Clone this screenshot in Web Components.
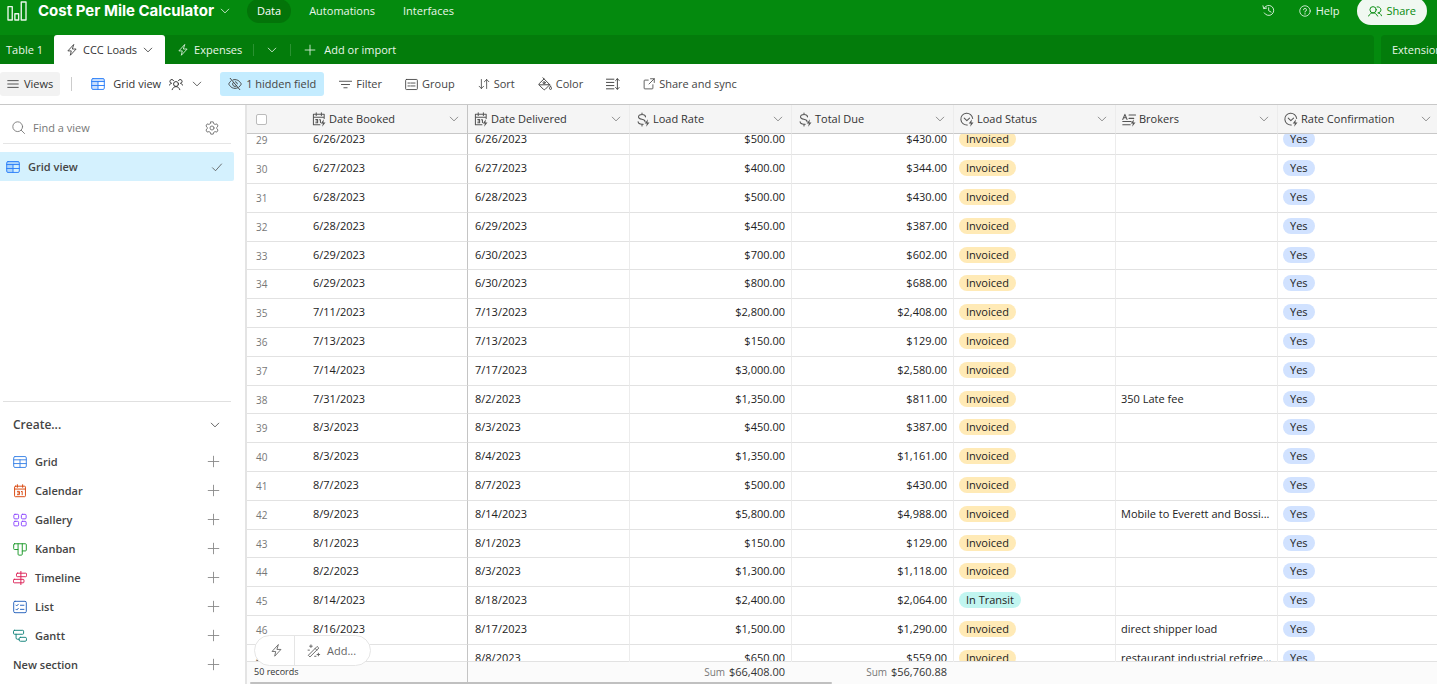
<!DOCTYPE html>
<html lang="en">
<head>
<meta charset="utf-8">
<title>Cost Per Mile Calculator</title>
<style>
  html, body {
    margin: 0;
    height: 100%;
  }

  body {
    display: flex;
    flex-direction: column;
    overflow: hidden;
    background: #fff;
    color: #333;
    font: 11px/16px "Open Sans", "Noto Sans", sans-serif;
  }

  main {
    flex: 1;
    min-height: 0;
    display: flex;
  }

  record-grid {
    flex: 1;
    min-width: 0;
  }
</style>
</head>
<body>
  <app-header name="Cost Per Mile Calculator"></app-header>
  <table-tabs></table-tabs>
  <view-toolbar></view-toolbar>
  <main>
    <views-sidebar></views-sidebar>
    <record-grid></record-grid>
  </main>

<script>
const BOLT = '<path fill="currentColor" stroke="none" d="M12.8 7.6 9.3 12.2h2.3l-.8 3.6 3.6-4.7h-2.3z"/>';

const ICONS = {
  logo: '<path d="M.8 4.5h3.4v10.7H.8zM6.3 10.2h3v5h-3zM11.4.8h3.8v14.4h-3.8z"/>',
  chevron: '<path d="M3 5.5 8 10.5l5-5"/>',
  bolt: '<path d="M10 1 2.5 9.2H7L5.8 15l7.7-8.3H9z"/>',
  plus: '<path d="M8 1.5v13M1.5 8h13"/>',
  menu: '<path d="M1 3.5h14M1 8h14M1 12.5h14"/>',
  check: '<path d="m2 9 4 4 8-9"/>',
  history: '<path d="M2.6 5.2A6.2 6.2 0 1 1 2.8 11M1.2 2.2l.9 3.6 3.6-.8M8.2 4.6v3.6l3 1.8"/>',
  help: '<circle cx="8" cy="8" r="7"/><path d="M6 6.4A2 2 0 1 1 8 8.5v1M8 11.3v1"/>',
  people: '<circle cx="5.8" cy="6.6" r="3.6"/><path d="M.6 13.8c1-2.200 3-3.600 5.200-3.600s4.200 1.400 5.200 3.600M10.400 3.300a3.500 3.500 0 1 1 .8 6.900c2-.1 3.400 1.100 4.300 3.300"/>',
  collab: '<circle cx="8" cy="8" r="2.800"/><path d="M3.600 14.500c.8-2.200 2.400-3.500 4.400-3.500s3.600 1.300 4.400 3.500M.4 9.400c.5-1.200 1.300-2 2.600-2.200A2.200 2.200 0 1 1 5.200 4M15.600 9.400c-.5-1.200-1.300-2-2.600-2.200A2.200 2.200 0 1 0 10.800 4"/>',
  table: '<rect x=".8" y="1.800" width="14.400" height="12.400" rx="1.500"/><path d="M.8 5.200h14.400M.8 9.700h14.400M8 5.200v9"/><path stroke="none" fill="currentColor" opacity=".25" d="M1 2h14v3H1zM1 5h7v9H1z"/>',
  grid: '<rect x=".8" y="1.800" width="14.400" height="12.400" rx="1.500"/><path d="M.8 5.500h14.400M.8 9.800h14.400M8 5.500v8.700"/>',
  hidden: '<path d="M3.500 4.400C1.900 5.600.8 8 .8 8s2.300 5 7.200 5c1.400 0 2.600-.4 3.600-.9M5.800 3.300C6.500 3.100 7.200 3 8 3c4.900 0 7.200 5 7.200 5s-.8 1.700-2.300 3.100M9.900 10A2.700 2.700 0 0 1 6.100 6.100M8.500 5.400a2.700 2.700 0 0 1 2.200 2.400M2.500 1.500l11 13"/>',
  filter: '<path d="M.5 4h15M3 8h10M6 12h4"/>',
  group: '<rect x=".8" y="1.800" width="14.400" height="12.400" rx="1"/><path d="M3.600 6.200h2M7 6.200h5.400M3.600 9.800h2M7 9.800h5.400"/>',
  sort: '<path d="M4.500 2v12M1.500 11l3 3 3-3M11.500 14V2M8.500 5l3-3 3 3"/>',
  color: '<path d="m5.500.8 8 8-5.300 5.300a1.400 1.400 0 0 1-2 0L1.500 9.400a1.400 1.400 0 0 1 0-2l5.400-5.200M1.500 9l11.800-.2"/><circle cx="7" cy="6.500" r="1.200"/><path d="M14.300 10.500s1.200 1.600 1.200 2.500a1.200 1.200 0 0 1-2.400 0c0-.9 1.200-2.500 1.200-2.500z"/>',
  height: '<path d="M.5 2.500h8.500M.5 6.200h8.500M.5 9.800h8.500M.5 13.500h8.500M13 2v12M11 4l2-2 2 2M11 12l2 2 2-2"/>',
  external: '<path d="M7 2.800H2.500a1 1 0 0 0-1 1v9.700a1 1 0 0 0 1 1h9.700a1 1 0 0 0 1-1V9M10 1h5v5M15 1 8 8"/>',
  search: '<circle cx="7" cy="7" r="6"/><path d="m11.400 11.400 4 4"/>',
  gear: '<circle cx="8" cy="8" r="2.300"/><path d="M6.600 1h2.800l.5 2 1.600.9 2-.6 1.400 2.400L13.500 7.200v1.600l1.400 1.500-1.400 2.400-2-.6-1.600.9-.5 2H6.600l-.5-2-1.600-.9-2 .6-1.400-2.400L2.500 8.800V7.200L1.100 5.700l1.400-2.400 2 .6L6.100 3z"/>',
  calendar: '<rect x="1.800" y="2.500" width="12.400" height="12" rx="1"/><path d="M1.800 5.800h12.400M5 .8v3M11 .8v3M5 8.400h2.300v3.800H5M5.400 10.200h1.900M9.500 8.700l1-.4v4"/>',
  gallery: '<rect x="1" y="1.500" width="5.400" height="5.200" rx="1.200"/><rect x="9.600" y="1.500" width="5.400" height="5.200" rx="1.200"/><rect x="1" y="9.500" width="5.400" height="5.200" rx="1.200"/><rect x="9.600" y="9.500" width="5.400" height="5.200" rx="1.200"/>',
  kanban: '<path d="M1.800 2h12.400a1 1 0 0 1 1 1v6.200a1 1 0 0 1-1 1h-3.600V14a1 1 0 0 1-1 1H6.800a1 1 0 0 1-1-1V8.600h-4a1 1 0 0 1-1-1V3a1 1 0 0 1 1-1zM5.800 2v6.600M10.600 2v8.200"/>',
  timeline: '<path d="M9 0v16"/><rect x="4" y="2.500" width="11.500" height="4" rx="1"/><rect x=".5" y="9.500" width="12" height="4" rx="1"/>',
  list: '<rect x=".8" y="1.500" width="14.400" height="13" rx="1.500"/><path d="m3.300 5.800 1 1 1.800-2M8.500 6h4M3.300 10.500l1 1 1.800-2M8.500 10.700h4"/>',
  gantt: '<rect x=".6" y="1.500" width="11.500" height="4.500" rx="1"/><rect x="7" y="9.500" width="8.400" height="4.500" rx="1.500"/><path d="M3.500 6v4.200a1.500 1.500 0 0 0 1.500 1.500h2"/>',
  wand: '<path d="M1.800 12.600 11.600 2.800l1.900 1.800-9.800 9.900zM9.300 5.100l1.900 1.900"/><path d="M3 2.500h3M4.500 1v3M11.500 12h3M13 10.500v3M8.700 14h1.600M1.200 7h1.600"/>',
  date: '<path d="M8.500 13.500H1.500v-11h11.500V7M1.500 5.500H13M4.500.8v3M10 .8v3M4 8h2v3.500H4M4.300 9.700H6M8 8.200h1v3"/>' + BOLT,
  currency: '<path d="M10.200 5.200C10 3.600 8.600 2.700 6.500 2.700S2.700 3.700 2.700 5.300c0 3.600 7 1.500 7 5M2.200 10.300c.2 1.800 1.900 2.700 4.200 2.700h1.300M6.400 1v1.700M6.400 13v1.800"/>' + BOLT,
  select: '<path d="M7.800 13.800A6.300 6.300 0 1 1 13.500 7M4.500 6.500l2.800 2.800 2.900-2.800"/>' + BOLT,
  text: '<path d="m.8 8 2.300-5.500L5.400 8M1.600 6.200h3M7.500 3.200h7M7.500 6.800h5M.8 10.200h9M.8 13.500h8"/>' + BOLT
};

/** Line icon that takes its colour from the text around it. */
class UiIcon extends HTMLElement {
  constructor() {
    super();
    this.attachShadow({ mode: 'open' });
  }

  connectedCallback() {
    const size = this.getAttribute('size') || 14;
    this.shadowRoot.innerHTML = `
      <style>
        :host { display: inline-flex; flex: none; }
        svg {
          display: block;
          fill: none;
          stroke: currentColor;
          stroke-width: 1.1;
          stroke-linejoin: round;
          stroke-linecap: round;
        }
      </style>
      <svg width="${size}" height="${size}" viewBox="0 0 16 16" aria-hidden="true">${ICONS[this.getAttribute('name')] || ''}</svg>
    `;
  }
}

/** Toolbar button: optional icon and slotted label. */
class ToolButton extends HTMLElement {
  constructor() {
    super();
    this.attachShadow({ mode: 'open' });
  }

  connectedCallback() {
    const icon = this.getAttribute('icon');
    const size = this.getAttribute('size') || 13;
    const label = this.getAttribute('label');
    this.shadowRoot.innerHTML = `
      <style>
        :host { display: flex; flex: none; }
        button {
          display: flex;
          align-items: center;
          gap: 4px;
          height: 24px;
          padding: 0 8px;
          border: 0;
          border-radius: 3px;
          background: none;
          color: #444;
          font: inherit;
          white-space: nowrap;
        }
        :host([tone="gray"]) button { background: #f2f2f2; color: #333; gap: 5px; padding: 0 7px; }
        :host([tone="blue"]) button { background: #c4ecff; }
      </style>
      <button type="button" ${label ? `aria-label="${label}"` : ''}>
        ${icon ? `<ui-icon name="${icon}" size="${size}"></ui-icon>` : ''}<slot></slot>
      </button>
    `;
  }
}

class AppHeader extends HTMLElement {
  constructor() {
    super();
    this.attachShadow({ mode: 'open' });
  }

  connectedCallback() {
    this.shadowRoot.innerHTML = `
      <style>
        :host { display: block; background: #048a0e; color: #e9f6ea; }
        header {
          display: flex;
          align-items: center;
          height: 21px;
          padding: 0 10px 14px 7px;
          white-space: nowrap;
        }
        h1 {
          margin: 0 5px 0 11px;
          color: #fff;
          font: 700 15px/20px Inter, "Open Sans", sans-serif;
        }
        nav { display: flex; align-items: center; gap: 8px; margin-left: 16px; }
        a { padding: 4px 10px; border-radius: 13px; color: inherit; text-decoration: none; }
        a.current { background: #037409; color: #fff; }
        .right { display: flex; align-items: center; gap: 18px; margin-left: auto; }
        button {
          display: flex;
          align-items: center;
          gap: 5px;
          padding: 0;
          border: 0;
          background: none;
          color: inherit;
          font: inherit;
        }
        .history { margin-right: 6px; }
        .share {
          height: 28px;
          padding: 0 11px;
          border-radius: 14px;
          background: #f0f8f1;
          color: #048a0e;
          gap: 4px;
        }
      </style>
      <header>
        <ui-icon name="logo" size="20"></ui-icon>
        <h1>${this.getAttribute('name')}</h1>
        <button type="button" aria-label="Base menu"><ui-icon name="chevron" size="12"></ui-icon></button>
        <nav>
          <a class="current" href="#data">Data</a>
          <a href="#automations">Automations</a>
          <a href="#interfaces">Interfaces</a>
        </nav>
        <div class="right">
          <button class="history" type="button" aria-label="History"><ui-icon name="history" size="13"></ui-icon></button>
          <button type="button"><ui-icon name="help" size="12"></ui-icon>Help</button>
          <button class="share" type="button"><ui-icon name="people"></ui-icon>Share</button>
        </div>
      </header>
    `;
  }
}

class TableTabs extends HTMLElement {
  constructor() {
    super();
    this.attachShadow({ mode: 'open' });
  }

  connectedCallback() {
    this.shadowRoot.innerHTML = `
      <style>
        :host { display: flex; gap: 7px; height: 29px; background: #048a0e; color: #e9f6ea; }
        nav {
          flex: 1;
          display: flex;
          align-items: center;
          border-radius: 0 4px 0 0;
          background: #037c0b;
          white-space: nowrap;
        }
        a, button {
          display: flex;
          align-items: center;
          gap: 5px;
          height: 29px;
          padding: 0;
          border: 0;
          background: none;
          color: inherit;
          font: inherit;
          text-decoration: none;
        }
        .first { padding: 0 11px 0 6px; }
        .current { padding: 0 11px 0 12px; border-radius: 3px 3px 0 0; background: #fff; color: #333; }
        .next { padding: 0 11px 0 12px; }
        .more { padding: 0 12px; }
        .add { padding: 0 13px; gap: 8px; }
        i { width: 1px; height: 12px; background: #2b9232; }
        .extensions {
          width: 56px;
          padding-left: 11px;
          border-radius: 4px 0 0 0;
          background: #037c0b;
          overflow: hidden;
        }
      </style>
      <nav>
        <a class="first" href="#table-1">Table 1</a>
        <a class="current" href="#ccc-loads"><ui-icon name="bolt" size="12"></ui-icon>CCC Loads<ui-icon name="chevron" size="12"></ui-icon></a>
        <a class="next" href="#expenses"><ui-icon name="bolt" size="12"></ui-icon>Expenses</a>
        <i></i>
        <button class="more" type="button" aria-label="All tables"><ui-icon name="chevron" size="12"></ui-icon></button>
        <i></i>
        <button class="add" type="button"><ui-icon name="plus" size="12"></ui-icon>Add or import</button>
      </nav>
      <button class="extensions" type="button">Extension</button>
    `;
  }
}

class ViewToolbar extends HTMLElement {
  constructor() {
    super();
    this.attachShadow({ mode: 'open' });
  }

  connectedCallback() {
    this.shadowRoot.innerHTML = `
      <style>
        :host {
          display: flex;
          align-items: center;
          gap: 7px;
          height: 40px;
          border-bottom: 1px solid #c8c8c8;
        }
        i { width: 1px; height: 14px; margin: 0 4px; background: #ccc; }
        .table { color: #2d7ff9; }
        .name { color: #333; }
        .view { margin-right: 2px; }
        .name, .table { margin-right: 4px; }
      </style>
      <tool-button tone="gray" icon="menu" size="12">Views</tool-button>
      <i></i>
      <tool-button class="view">
        <ui-icon class="table" name="table"></ui-icon>
        <span class="name">Grid view</span>
        <ui-icon class="name" name="collab"></ui-icon>
        <ui-icon name="chevron" size="12"></ui-icon>
      </tool-button>
      <tool-button tone="blue" icon="hidden" size="14">1 hidden field</tool-button>
      <tool-button icon="filter">Filter</tool-button>
      <tool-button icon="group">Group</tool-button>
      <tool-button icon="sort" size="12">Sort</tool-button>
      <tool-button icon="color" size="14">Color</tool-button>
      <tool-button icon="height" size="14" label="Row height"></tool-button>
      <tool-button icon="external" size="12">Share and sync</tool-button>
    `;
  }
}

const VIEW_TYPES = [
  { name: 'Grid', icon: 'grid', color: '#3b83e6' },
  { name: 'Calendar', icon: 'calendar', color: '#d9480f' },
  { name: 'Gallery', icon: 'gallery', color: '#8b46ff' },
  { name: 'Kanban', icon: 'kanban', color: '#1e9a2c' },
  { name: 'Timeline', icon: 'timeline', color: '#dc1f55' },
  { name: 'List', icon: 'list', color: '#2763bd' },
  { name: 'Gantt', icon: 'gantt', color: '#14847c' },
  { name: 'New section' }
];

class ViewsSidebar extends HTMLElement {
  constructor() {
    super();
    this.attachShadow({ mode: 'open' });
  }

  connectedCallback() {
    const items = VIEW_TYPES.map(
      (type) => `
        <button type="button">
          ${type.icon ? `<ui-icon name="${type.icon}" style="color: ${type.color}"></ui-icon>` : ''}
          <span>${type.name}</span>
          <ui-icon class="end" name="plus" size="13"></ui-icon>
        </button>`
    ).join('');

    this.shadowRoot.innerHTML = `
      <style>
        :host {
          display: flex;
          flex-direction: column;
          flex: none;
          width: 245px;
          border-right: 2px solid #e4e4e4;
        }
        .search {
          box-sizing: border-box;
          display: flex;
          align-items: center;
          gap: 8px;
          height: 39px;
          margin: 0 14px 8px 3px;
          padding: 7px 12px 0 9px;
          border-bottom: 1px solid #e5e5e5;
          color: #777;
        }
        input {
          flex: 1;
          min-width: 0;
          padding: 0;
          border: 0;
          outline: 0;
          background: none;
          font: inherit;
        }
        input::placeholder { color: #777; }
        button {
          display: flex;
          align-items: center;
          gap: 8px;
          height: 29px;
          padding: 0 25px 0 13px;
          border: 0;
          background: none;
          color: #444;
          font: inherit;
          font-weight: 600;
          text-align: left;
        }
        .search button { padding: 0; color: #777; }
        .end { margin-left: auto; color: #888; }
        .active {
          margin-right: 11px;
          padding: 0 11px 0 6px;
          border-radius: 0 2px 2px 0;
          background: #d4f1fe;
        }
        .active .end { color: #555; }
        .active .table { color: #2d7ff9; }
        .create {
          display: flex;
          flex-direction: column;
          margin-top: auto;
          padding-bottom: 5px;
        }
        .create::before { content: ""; margin: 0 14px 0 3px; border-top: 1px solid #e0e0e0; }
        .create .title { height: 45px; padding-right: 24px; font-size: 12px; }
        .title .end { color: #444; }
      </style>
      <div class="search">
        <ui-icon name="search" size="13"></ui-icon>
        <input type="text" placeholder="Find a view" aria-label="Find a view">
        <button type="button" aria-label="View settings"><ui-icon name="gear"></ui-icon></button>
      </div>
      <button class="active" type="button">
        <ui-icon class="table" name="table"></ui-icon>
        <span>Grid view</span>
        <ui-icon class="end" name="check" size="12"></ui-icon>
      </button>
      <div class="create">
        <button class="title" type="button">Create...<ui-icon class="end" name="chevron" size="12"></ui-icon></button>
        ${items}
      </div>
    `;
  }
}

const FIELDS = [
  { name: 'Date Booked', icon: 'date' },
  { name: 'Date Delivered', icon: 'date' },
  { name: 'Load Rate', icon: 'currency', sum: '$66,408.00' },
  { name: 'Total Due', icon: 'currency', sum: '$56,760.88' },
  { name: 'Load Status', icon: 'select' },
  { name: 'Brokers', icon: 'text' },
  { name: 'Rate Confirmation', icon: 'select' }
];

// number, booked, delivered, rate, due, status, broker
const RECORDS = [
  [29, '6/26/2023', '6/26/2023', '$500.00', '$430.00', 'Invoiced', ''],
  [30, '6/27/2023', '6/27/2023', '$400.00', '$344.00', 'Invoiced', ''],
  [31, '6/28/2023', '6/28/2023', '$500.00', '$430.00', 'Invoiced', ''],
  [32, '6/28/2023', '6/29/2023', '$450.00', '$387.00', 'Invoiced', ''],
  [33, '6/29/2023', '6/30/2023', '$700.00', '$602.00', 'Invoiced', ''],
  [34, '6/29/2023', '6/30/2023', '$800.00', '$688.00', 'Invoiced', ''],
  [35, '7/11/2023', '7/13/2023', '$2,800.00', '$2,408.00', 'Invoiced', ''],
  [36, '7/13/2023', '7/13/2023', '$150.00', '$129.00', 'Invoiced', ''],
  [37, '7/14/2023', '7/17/2023', '$3,000.00', '$2,580.00', 'Invoiced', ''],
  [38, '7/31/2023', '8/2/2023', '$1,350.00', '$811.00', 'Invoiced', '350 Late fee'],
  [39, '8/3/2023', '8/3/2023', '$450.00', '$387.00', 'Invoiced', ''],
  [40, '8/3/2023', '8/4/2023', '$1,350.00', '$1,161.00', 'Invoiced', ''],
  [41, '8/7/2023', '8/7/2023', '$500.00', '$430.00', 'Invoiced', ''],
  [42, '8/9/2023', '8/14/2023', '$5,800.00', '$4,988.00', 'Invoiced', 'Mobile to Everett and Bossi...'],
  [43, '8/1/2023', '8/1/2023', '$150.00', '$129.00', 'Invoiced', ''],
  [44, '8/2/2023', '8/3/2023', '$1,300.00', '$1,118.00', 'Invoiced', ''],
  [45, '8/14/2023', '8/18/2023', '$2,400.00', '$2,064.00', 'In Transit', ''],
  [46, '8/16/2023', '8/17/2023', '$1,500.00', '$1,290.00', 'Invoiced', 'direct shipper load'],
  [47, '', '8/8/2023', '$650.00', '$559.00', 'Invoiced', 'restaurant industrial refrige...']
];

/** Coloured pill for a single-select value. */
class SelectBadge extends HTMLElement {
  constructor() {
    super();
    this.attachShadow({ mode: 'open' });
    this.shadowRoot.innerHTML = `
      <style>
        :host {
          display: inline-block;
          padding: 0 7px;
          border-radius: 8px;
          background: #ffeab6;
          line-height: 16px;
          vertical-align: top;
        }
        :host([tone="teal"]) { background: #c1f5f0; }
        :host([tone="blue"]) { background: #d1e2ff; }
      </style>
      <slot></slot>
    `;
  }
}

class RecordGrid extends HTMLElement {
  constructor() {
    super();
    this.attachShadow({ mode: 'open' });
  }

  connectedCallback() {
    this.render();
    this.shadowRoot.querySelector('.scroller').scrollTop = 8;
  }

  render() {
    const heads = FIELDS.map(
      (field) => `
        <th scope="col"><div class="head">
          <ui-icon name="${field.icon}" size="15"></ui-icon>${field.name}
          <button type="button" aria-label="${field.name} menu"><ui-icon name="chevron" size="12"></ui-icon></button>
        </div></th>`
    ).join('');

    const rows = RECORDS.map(
      ([number, booked, delivered, rate, due, status, broker]) => `
        <tr>
          <td class="number">${number}</td>
          <td>${booked}</td>
          <td>${delivered}</td>
          <td class="money">${rate}</td>
          <td class="money">${due}</td>
          <td class="badge"><select-badge tone="${status === 'In Transit' ? 'teal' : 'yellow'}">${status}</select-badge></td>
          <td class="badge">${broker}</td>
          <td class="badge"><select-badge tone="blue">Yes</select-badge></td>
        </tr>`
    ).join('');

    const sums = FIELDS.slice(1)
      .map((field) => `<td class="money">${field.sum ? `<small>Sum</small> ${field.sum}` : ''}</td>`)
      .join('');

    this.shadowRoot.innerHTML = `
      <style>
        :host { display: flex; flex-direction: column; position: relative; }
        .scroller { flex: 1; min-height: 0; overflow: hidden; }
        table {
          width: 1193px;
          min-width: 100%;
          table-layout: fixed;
          border-collapse: separate;
          border-spacing: 0;
        }
        .gutter { width: 59px; }
        th, td {
          box-sizing: border-box;
          height: 29px;
          padding: 0 6px 0 7px;
          border-right: 1px solid #ececec;
          border-bottom: 1px solid #e2e2e2;
          font-weight: 400;
          text-align: left;
          white-space: nowrap;
          overflow: hidden;
        }
        tbody td { padding-bottom: 2px; color: #222; }
        /* row pitch averages a little under 29px */
        tbody tr:nth-child(5n) td { height: 28px; }
        tr > :first-child { border-right: 0; }
        th:nth-child(2), td:nth-child(2), tfoot td:first-child { border-right: 1px solid #c4c4c4; }
        thead th {
          position: sticky;
          top: 0;
          z-index: 1;
          background: #f5f5f5;
          border-bottom-color: #c8c8c8;
          padding: 0 7px 0 6px;
        }
        .head { display: flex; align-items: center; gap: 2px; }
        .head button { margin-left: auto; padding: 0; border: 0; background: none; color: #777; display: flex; }
        .head > ui-icon { color: #555; }
        th input {
          display: block;
          appearance: none;
          width: 11px;
          height: 11px;
          margin: 0 0 0 3px;
          border: 1px solid #bbb;
          border-radius: 2px;
          background: #fff;
        }
        tbody .number { padding: 0 0 0 9px; color: #777; font-size: 10px; }
        .money { text-align: right; }
        td.badge { padding-left: 5px; padding-right: 4px; }
        tfoot td {
          position: sticky;
          bottom: 0;
          z-index: 1;
          height: 21px;
          border-top: 1px solid #e2e2e2;
          border-bottom: 0;
          border-right-color: transparent;
          background: #fbfbfb;
        }
        tfoot td:nth-child(2) { border-right-color: transparent; }
        tfoot td:first-child { font-size: 9px; }
        small { margin-right: 1px; color: #777; font-size: 10px; }
        .track { height: 2px; padding-left: 3px; background: #fbfbfb; }
        .thumb { width: 49%; height: 2px; border-radius: 1px; background: #c0c0c0; }
        .add {
          position: absolute;
          left: 7px;
          bottom: 18px;
          z-index: 2;
          display: flex;
          height: 29px;
          border: 1px solid #e5e5e5;
          border-radius: 16px;
          background: #fff;
        }
        .add button {
          display: flex;
          align-items: center;
          gap: 6px;
          padding: 0 14px 0 12px;
          border: 0;
          background: none;
          color: #666;
          font: inherit;
        }
        .add button:first-child { padding: 0 11px 0 15px; border-right: 1px solid #e5e5e5; }
      </style>
      <div class="scroller">
        <table>
          <colgroup><col class="gutter"><col span="7"></colgroup>
          <thead>
            <tr><th><input type="checkbox" aria-label="Select all records"></th>${heads}</tr>
          </thead>
          <tbody>${rows}</tbody>
          <tfoot>
            <tr><td colspan="2">50 records</td>${sums}</tr>
          </tfoot>
        </table>
      </div>
      <div class="track"><div class="thumb"></div></div>
      <div class="add">
        <button type="button" aria-label="Automations"><ui-icon name="bolt" size="13"></ui-icon></button>
        <button type="button"><ui-icon name="wand"></ui-icon>Add...</button>
      </div>
    `;
  }
}

customElements.define('ui-icon', UiIcon);
customElements.define('tool-button', ToolButton);
customElements.define('select-badge', SelectBadge);
customElements.define('app-header', AppHeader);
customElements.define('table-tabs', TableTabs);
customElements.define('view-toolbar', ViewToolbar);
customElements.define('views-sidebar', ViewsSidebar);
customElements.define('record-grid', RecordGrid);
</script>
</body>
</html>
